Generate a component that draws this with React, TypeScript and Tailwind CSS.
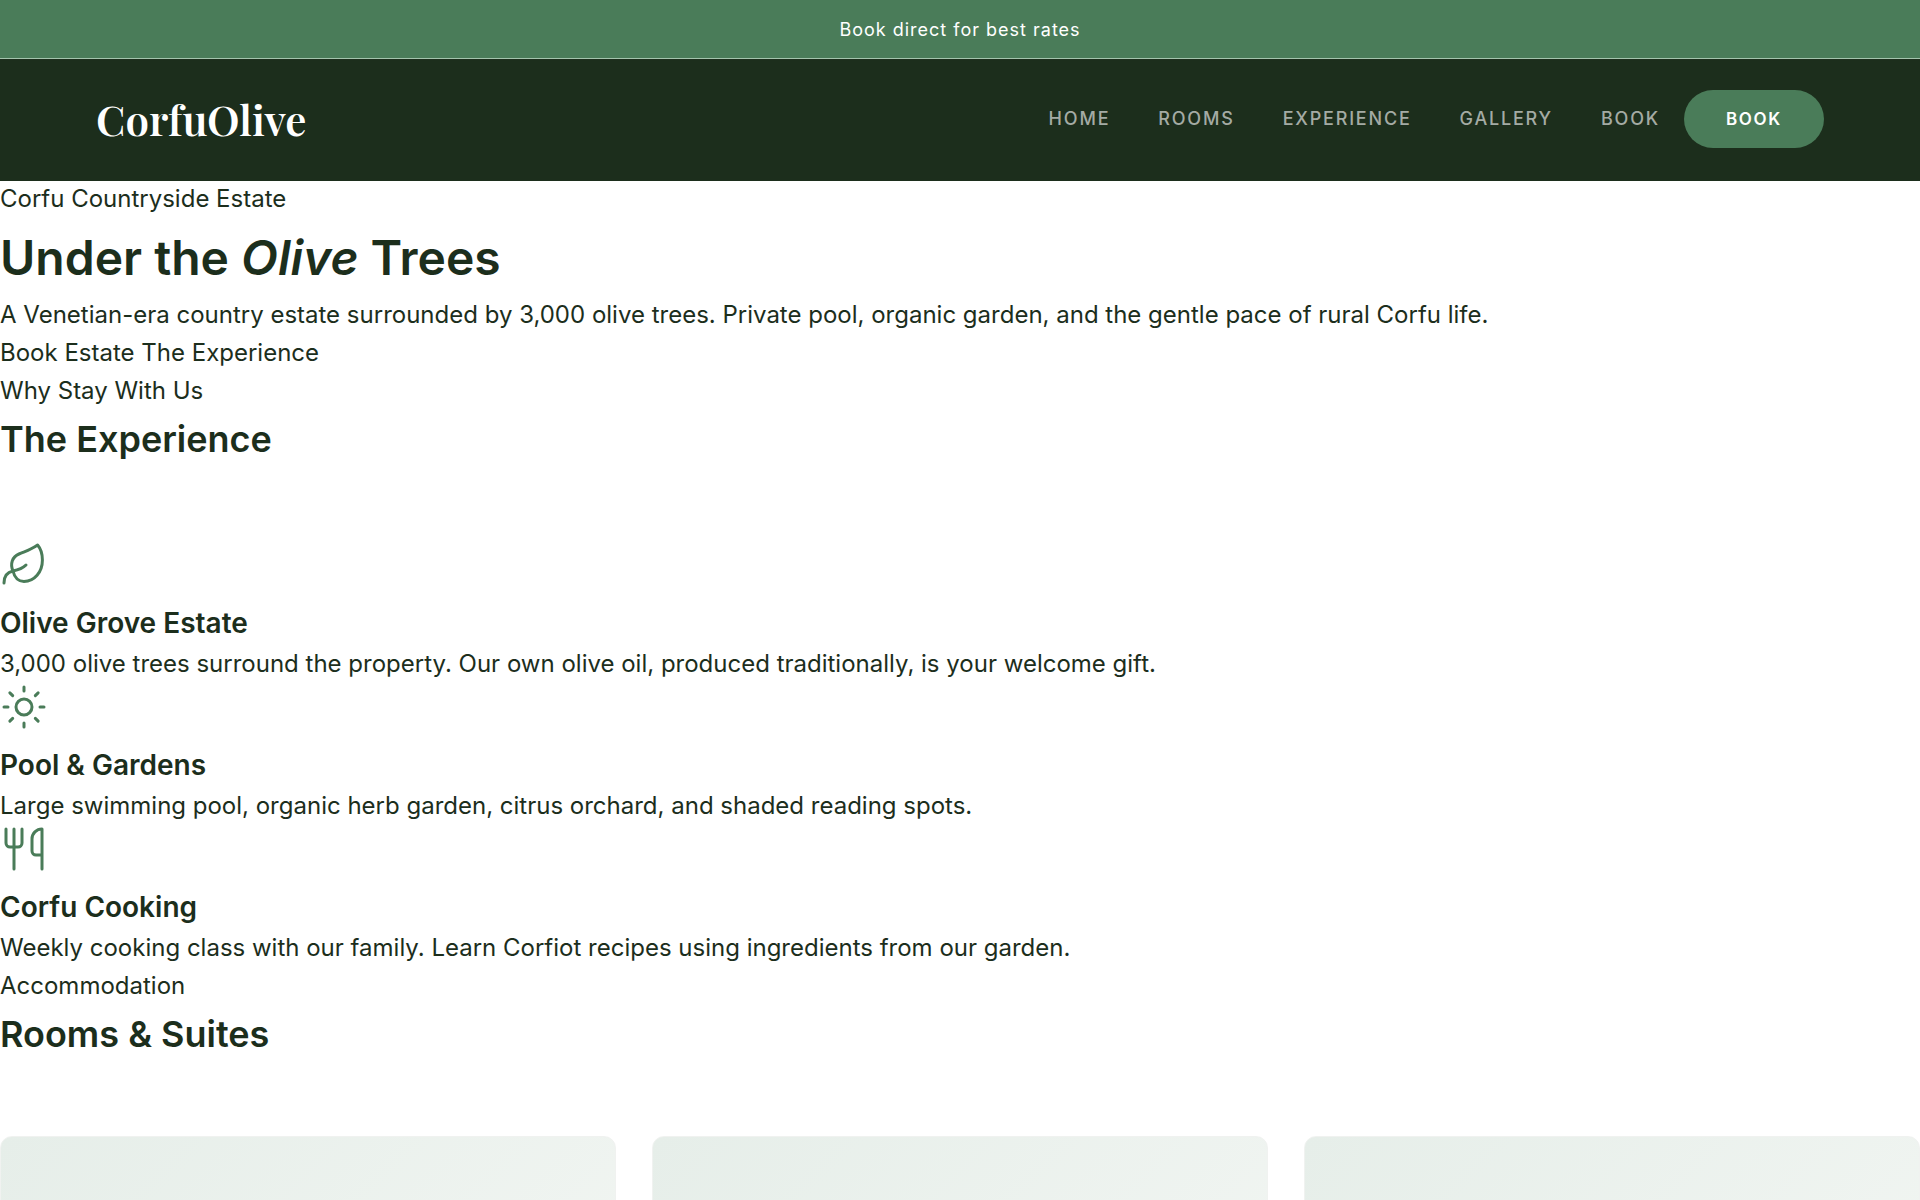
const NAV_LINKS = ["Home", "Rooms", "Experience", "Gallery", "Book"];

const ROOMS = ["Olive Suite", "Garden Room", "Orchard Room"];

function LeafIcon() {
  return (
    <svg className="block size-12" viewBox="0 0 24 24" fill="none" stroke="currentColor" strokeWidth="1.5" strokeLinecap="round" strokeLinejoin="round" aria-hidden="true">
      <path d="M6.5 15C5 11.5 6 8 9.5 6.5C13 5 15.5 4.3 18.8 2C20.5 4 21.2 7 21.2 9.5C21.2 15.6 17.2 20.2 12 20.2C9 20.2 7.2 18 6.5 15Z" />
      <path d="M2 21C2 18 3.2 15.7 6.5 15C9.5 14.4 11.8 13.2 13 12" />
    </svg>
  );
}

function SunIcon() {
  return (
    <svg className="block size-12" viewBox="0 0 24 24" fill="none" stroke="currentColor" strokeWidth="1.5" strokeLinecap="round" strokeLinejoin="round" aria-hidden="true">
      <circle cx="12" cy="12" r="4" />
      <path d="M12 2v2M12 20v2M4.93 4.93l1.41 1.41M17.66 17.66l1.41 1.41M2 12h2M20 12h2M6.34 17.66l-1.41 1.41M19.07 4.93l-1.41 1.41" />
    </svg>
  );
}

function UtensilsIcon() {
  return (
    <svg className="block size-12" viewBox="0 0 24 24" fill="none" stroke="currentColor" strokeWidth="1.5" strokeLinecap="round" strokeLinejoin="round" aria-hidden="true">
      <path d="M3 2v7c0 1.1.9 2 2 2h4a2 2 0 0 0 2-2V2M7 2v20M21 15V2a5 5 0 0 0-5 5v6c0 1.1.9 2 2 2h3Zm0 0v7" />
    </svg>
  );
}

const FEATURES = [
  {
    icon: LeafIcon,
    title: "Olive Grove Estate",
    text: "3,000 olive trees surround the property. Our own olive oil, produced traditionally, is your welcome gift.",
  },
  {
    icon: SunIcon,
    title: "Pool & Gardens",
    text: "Large swimming pool, organic herb garden, citrus orchard, and shaded reading spots.",
  },
  {
    icon: UtensilsIcon,
    title: "Corfu Cooking",
    text: "Weekly cooking class with our family. Learn Corfiot recipes using ingredients from our garden.",
  },
];

export default function App() {
  return (
    <div className="h-screen overflow-hidden bg-white font-['Inter',sans-serif] text-2xl leading-[38px] text-[#1c2e1c]">
      <div className="border-b border-[#a4c4ad] bg-[#4a7c59] pt-4 pb-[14px] text-center text-lg leading-7 tracking-[1px] text-white">
        Book direct for best rates
      </div>
      <header className="flex items-center justify-between border-b-2 border-[#1c2e1c] bg-[#1c2e1c] px-24 py-[31px]">
        <a href="#" className="font-['Playfair_Display','Liberation_Serif',serif] text-[42px] leading-[56px] font-semibold text-white">
          CorfuOlive
        </a>
        <nav className="flex items-center gap-6">
          <div className="flex gap-12 text-lg font-medium uppercase tracking-widest text-[#a4aba4]">
            {NAV_LINKS.map((link) => (
              <a key={link} href={`#${link.toLowerCase()}`}>{link}</a>
            ))}
          </div>
          <button type="button" className="rounded-full bg-[#4a7c59] px-[42px] py-4 text-[17px] leading-[26px] font-semibold uppercase tracking-widest text-white">
            Book
          </button>
        </nav>
      </header>
      <main>
        <section>
          <p className="leading-9">Corfu Countryside Estate</p>
          <h1 className="pt-3 pb-[9px] text-5xl leading-[58px] font-semibold">
            Under the <em>Olive</em> Trees
          </h1>
          <p>
            A Venetian-era country estate surrounded by 3,000 olive trees. Private pool, organic garden, and the gentle pace of rural Corfu life.
          </p>
          <p>
            <a href="#rooms">Book Estate</a> <a href="#experience">The Experience</a>
          </p>
        </section>
        <section id="experience">
          <p>Why Stay With Us</p>
          <h2 className="mb-20 pt-2 text-4xl leading-[43px] font-semibold">The Experience</h2>
          {FEATURES.map(({ icon: Icon, title, text }) => (
            <article key={title}>
              <div className="text-[#4a7c59]"><Icon /></div>
              <h3 className="mt-4 mb-1 text-[28px] leading-9 font-semibold">{title}</h3>
              <p>{text}</p>
            </article>
          ))}
        </section>
        <section id="rooms">
          <p>Accommodation</p>
          <h2 className="mb-20 pt-2 text-4xl leading-[43px] font-semibold">Rooms &amp; Suites</h2>
          <div className="grid grid-cols-3 gap-9">
            {ROOMS.map((room) => (
              <article key={room} aria-label={room} className="h-96 rounded-xl border border-[#f0f2f0] bg-linear-135 from-[#e6eee9] to-[#f4f7f4]" />
            ))}
          </div>
        </section>
      </main>
    </div>
  );
}
